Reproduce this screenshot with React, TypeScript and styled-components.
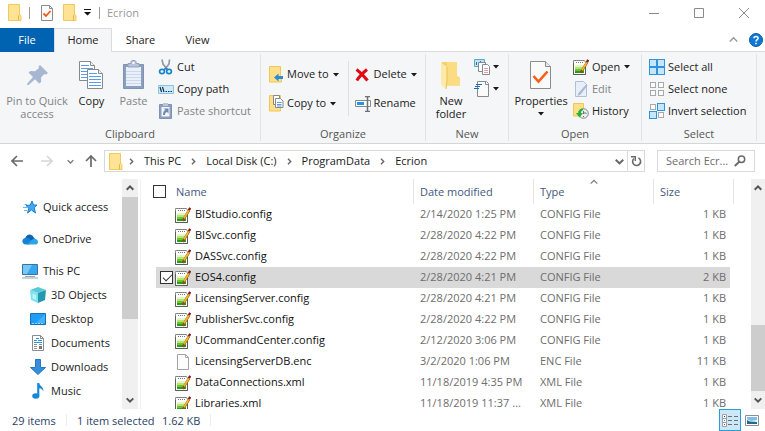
import React from "react";
import styled, { createGlobalStyle } from "styled-components";

const Global = createGlobalStyle`
  * { box-sizing: border-box; }
  body { margin: 0; background: #fff; }
  body, button, input { font: 11px/13px "Open Sans", "Noto Sans", sans-serif; color: #1a1a1a; }
  button { border: 0; padding: 0; background: none; white-space: nowrap; }
  svg { display: block; flex: none; }
`;

/* ---------- icons ---------- */

const Folder = () => (
  <svg width="14" height="17" viewBox="0 0 14 17">
    <path d="M.5.5h11v10l1.500 1v5H.5z" fill="#ffe394" stroke="#f1c95c" />
    <path d="M10.500 16v-4.500l1-1" fill="none" stroke="#e3b544" />
  </svg>
);

const CheckDoc = () => (
  <svg width="12" height="16" viewBox="0 0 12 16">
    <path d="M.5.5h8l3 3v12H.5z" fill="#fcfcfc" stroke="#8b8b8b" />
    <path d="M8.500.5v3h3" fill="none" stroke="#8b8b8b" />
    <path d="M2.500 8.500l2.500 2.500 4.500-5" fill="none" stroke="#f0591a" strokeWidth="1.800" />
  </svg>
);

const BigCheckDoc = () => (
  <svg width="22" height="29" viewBox="0 0 22 29">
    <path d="M.5.5h15l5 5v22H.5z" fill="#fafafa" stroke="#8b8b8b" />
    <path d="M15.500.5v5h5" fill="#e8e8e8" stroke="#8b8b8b" />
    <path d="M3.500 15l5 5.500 9-10" fill="none" stroke="#fa5e12" strokeWidth="2.600" />
  </svg>
);

const CaretDown = () => (
  <svg width="6" height="4" viewBox="0 0 6 4"><path d="M0 0h6L3 3.500z" fill="#1a1a1a" /></svg>
);

const QuickCaret = () => (
  <svg width="8" height="7" viewBox="0 0 8 7"><path d="M0 0h7v1H0zM0 3h7L3.500 6.500z" fill="#111" /></svg>
);

const Pin = () => (
  <svg width="21" height="22" viewBox="0 0 21 22">
    <path d="M13 1l8 8-2 1.500-2-.3-3 3.300.2 4.500-2 1.500-4.200-4.200L1.500 21 0 21l.3-1.500L6 13 1.500 8.500 3.500 7l4.500.2 4-3.200-.5-1.500z" fill="#a7b7d1" />
  </svg>
);

const Page = ({ x, y }: { x: number; y: number }) => (
  <g transform={`translate(${x} ${y})`}>
    <path d="M.5.5h11l4 4v15H.5z" fill="#fff" stroke="#858a90" />
    <path d="M11.500.5v4h4" fill="#eee" stroke="#858a90" />
    <path d="M2 4.500h8M2 7.500h12M2 10.500h12M2 13.500h12M2 16.500h12" stroke="#5b9bea" />
  </g>
);

const BigCopy = () => (
  <svg width="25" height="29" viewBox="0 0 25 29"><Page x={0} y={0} /><Page x={8} y={8} /></svg>
);

const BigPaste = () => (
  <svg width="21" height="30" viewBox="0 0 21 30">
    <path d="M.5 4.500h20v24H.5z" fill="#8d9fbe" stroke="#8092b2" />
    <path d="M3 7h15v19H3z" fill="#eaf0fa" />
    <path d="M3 11.500h15M3 14.500h15M3 17.500h15M3 20.500h15M3 23.500h15" stroke="#cbd8ec" />
    <path d="M5 7V3.500h3V1.500l1-1h3l1 1v2h3V7z" fill="#b7c4d9" stroke="#93a3bf" />
    <path d="M9.500 2h2v2h-2z" fill="#fff" />
  </svg>
);

const Scissors = () => (
  <svg width="16" height="16" viewBox="0 0 16 16">
    <path d="M4 .5L5 5l4.500 5.500M11.500.5L11 5l-4.500 5.500" fill="none" stroke="#8f9aa5" strokeWidth="1.700" />
    <ellipse cx="4" cy="12.500" rx="2.400" ry="2.200" fill="none" stroke="#1787c9" strokeWidth="1.700" />
    <ellipse cx="11" cy="12.500" rx="2.400" ry="2.200" fill="none" stroke="#1787c9" strokeWidth="1.700" />
    <path d="M6 11l2-2 2 2" fill="none" stroke="#1787c9" strokeWidth="1.400" />
  </svg>
);

const CopyPath = () => (
  <svg width="16" height="16" viewBox="0 0 16 16">
    <path d="M.5 4.500h15v8H.5z" fill="#cdeafa" stroke="#8cc3e2" />
    <path d="M2 6l1.500 5M4.500 6L6 11" stroke="#16324a" strokeWidth="1.200" />
    <path d="M7.500 10h1.500v1H7.500zM10 10h1.500v1H10zM12.500 10H14v1h-1.500z" fill="#16324a" />
  </svg>
);

const PasteShortcut = () => (
  <svg width="16" height="16" viewBox="0 0 16 16">
    <path d="M1.500 1.500h12v14h-12z" fill="#8d9fbe" stroke="#8092b2" />
    <path d="M5 0h5v3H5z" fill="#b7c4d9" />
    <path d="M3.500 4h8v9.500h-8z" fill="#f1f5fb" />
    <path d="M5.500 5.500h5v5L9 9c-1.500 0-2 1.500-2 3H5c0-3 1-4.500 2.500-5z" fill="#7086ab" />
  </svg>
);

const MoveTo = () => (
  <svg width="15" height="17" viewBox="0 0 15 17">
    <path d="M.5.5h11v9l1 1v5.500H.5z" fill="#ffe089" stroke="#efc757" />
    <path d="M5 11.500L9.500 7.500V10H14v3H9.500v2.500z" fill="#2f8ad8" />
  </svg>
);

const CopyTo = () => (
  <svg width="15" height="17" viewBox="0 0 15 17">
    <path d="M.5.500h11V16H.5z" fill="#ffe089" stroke="#efc757" />
    <path d="M4.500.5h6v9h-6z" fill="#fff" stroke="#858a90" />
    <path d="M6.500 3.500h5l2.500 2.500v6.500H6.500z" fill="#fff" stroke="#858a90" />
    <path d="M8 7.500h4.500M8 9.500h4.500M8 11h4.500" stroke="#5b9bea" />
  </svg>
);

const DeleteX = () => (
  <svg width="15" height="14" viewBox="0 0 15 14">
    <path d="M1.500 1.500C5 4 9.500 8.500 12.500 12.500M12 1.500C9 4 4 9 1.800 12.500" fill="none" stroke="#df0a14" strokeWidth="3" />
  </svg>
);

const Rename = () => (
  <svg width="16" height="16" viewBox="0 0 16 16">
    <path d="M.5 4.500h15v6H.5z" fill="#fff" stroke="#7d8a96" />
    <path d="M2 6h7v3H2z" fill="#2e90e0" />
    <path d="M12.500 1v14M10 .5h5M10 15.500h5" stroke="#6d7075" strokeWidth="1.500" />
  </svg>
);

const NewFolder = () => (
  <svg width="20" height="29" viewBox="0 0 20 29">
    <path d="M1 1h14l1 14 3 2v7.500H1z" fill="#f5cf6b" />
    <path d="M6 1h10v14.500l3 2.500v6.500H5z" fill="#fbdc82" />
    <path d="M0 1.500L6 6v14l-1 8-5-5z" fill="#ffeaa8" />
    <path d="M6 6v14l-1 8" fill="none" stroke="#e9c15a" />
  </svg>
);

const NewItem = () => (
  <svg width="17" height="17" viewBox="0 0 17 17">
    <path d="M.5.5h10v7H.5z" fill="#bfe3f5" stroke="#5fa6cd" />
    <path d="M2.500 3v3M6.500 2v3" stroke="#31739c" />
    <path d="M4.500 3.500h7v9h-7z" fill="#fff" stroke="#858a90" />
    <path d="M8.500 5.500h5l2 2v8h-7z" fill="#fff" stroke="#858a90" />
    <path d="M10 9.500h4M10 11.500h4M10 13.500h4" stroke="#e79a9a" />
  </svg>
);

const EasyAccess = () => (
  <svg width="17" height="17" viewBox="0 0 17 17">
    <path d="M3.500.5h9l2 2v13h-11z" fill="#fbfbfb" stroke="#858a90" />
    <path d="M11.500.5v3h3" fill="none" stroke="#858a90" />
    <path d="M2 3.500h6M1 5.500h5M0 7.500h5" stroke="#1a6db4" />
  </svg>
);

const Notepad = () => (
  <svg width="16" height="16" viewBox="0 0 16 16">
    <path d="M.5 1.500h11l1 2v12H.5z" fill="#fff" stroke="#8a8f87" />
    <path d="M.5 4v11.500h12V8" fill="none" stroke="#595e57" />
    <path d="M2 1.500h9M3 3.500h8" stroke="#777" strokeDasharray="1 1" />
    <path d="M2 6h9v2H2z" fill="#e4f5cb" />
    <path d="M2 8h9v2H2z" fill="#b4e56d" />
    <path d="M2 10h9v2H2z" fill="#6cc42c" />
    <path d="M2 12h9v2H2z" fill="#2f9a22" />
    <path d="M14 3.500L9 11.500l-1 2.500" fill="none" stroke="#7a5a1a" strokeWidth="2.400" />
    <path d="M13.800 3.500L9 11.300" stroke="#fdb62a" strokeWidth="1.700" />
    <path d="M15.200.8L13.900 3.300" stroke="#8d1620" strokeWidth="2.400" />
  </svg>
);

const EditIcon = () => (
  <svg width="16" height="16" viewBox="0 0 16 16">
    <path d="M2.500.5h8l3 3v12h-11z" fill="#e9eff8" stroke="#b1c0d8" />
    <path d="M13.500 3l-8 9-1 3 3-1.500 7-9z" fill="#a9b9d4" />
  </svg>
);

const HistoryIcon = () => (
  <svg width="16" height="16" viewBox="0 0 16 16">
    <path d="M.5.5h10V13H.5z" fill="#ffe089" stroke="#efc757" />
    <circle cx="10.500" cy="10.500" r="4.800" fill="#eceeee" stroke="#83898b" />
    <path d="M10.500 8v3l2-2M7.500 10.500h1M12.500 10.500h1M10.500 13v1" fill="none" stroke="#6b7072" />
    <path d="M9 5.500C6 6 5 8.500 5.500 10H3l3.500 4.500L10 10H8c0-2 1-2.500 2.500-3z" fill="#27b13c" />
  </svg>
);

const Squares = ({ on }: { on: boolean[] }) => (
  <svg width="16" height="16" viewBox="0 0 16 16">
    {on.map((v, i) => {
      const x = (i % 2) * 8, y = i > 1 ? 8 : 0;
      return v
        ? <rect key={i} x={x + 0.5} y={y + 0.5} width="7" height="7" fill="#c5e6fb" stroke="#2f93dd" />
        : <rect key={i} x={x + 1.5} y={y + 1.5} width="5" height="5" fill="#fbfbfb" stroke="#a9a9a9" />;
    })}
  </svg>
);

const Arrow = ({ color, up }: { color: string; up?: boolean }) => (
  <svg width="12" height="12" viewBox="0 0 12 12">
    <path d={up ? "M6 12V1M1 6l5-5 5 5" : "M12 6H1M6 1L1 6l5 5"} fill="none" stroke={color} strokeWidth="1.700" />
  </svg>
);

const ArrowRight = () => (
  <svg width="12" height="12" viewBox="0 0 12 12">
    <path d="M0 6h11M6 1l5 5-5 5" fill="none" stroke="#d6d6d6" strokeWidth="1.700" />
  </svg>
);

const Chevron = ({ w = 8, color = "#555", stroke = 1.5, up }: { w?: number; color?: string; stroke?: number; up?: boolean }) => (
  <svg width={w} height={w} viewBox="0 0 8 8">
    <path d={up ? "M.7 5.700L4 2.400l3.300 3.300" : "M.7 2.400L4 5.700l3.300-3.300"} fill="none" stroke={color} strokeWidth={stroke} />
  </svg>
);

const Crumb = () => (
  <svg width="5" height="7" viewBox="0 0 5 7"><path d="M1 .700L3.700 3.500 1 6.300" fill="none" stroke="#666" strokeWidth="1.400" /></svg>
);

const RefreshIcon = () => (
  <svg width="11" height="12" viewBox="0 0 11 12">
    <path d="M7.500 3A4 4 0 1 1 3 3.500" fill="none" stroke="#6b6b6b" strokeWidth="1.600" />
    <path d="M0 1.800h4.300V6" fill="none" stroke="#6b6b6b" strokeWidth="1.400" />
  </svg>
);

const Magnifier = () => (
  <svg width="12" height="12" viewBox="0 0 12 12">
    <circle cx="7.500" cy="4.300" r="3.200" fill="none" stroke="#6b6b6b" strokeWidth="1.500" />
    <path d="M5.200 6.700L.8 11" stroke="#6b6b6b" strokeWidth="1.900" />
  </svg>
);

const Help = () => (
  <svg width="14" height="14" viewBox="0 0 14 14">
    <circle cx="7" cy="7" r="6.500" fill="#0f78d4" stroke="#0b5cab" />
    <path d="M4.900 5.300C5 2.800 9.100 2.800 9.100 5.200 9.100 6.600 7 6.800 7 8.600M7 9.700v1.500" fill="none" stroke="#fff" strokeWidth="1.500" />
  </svg>
);

const Star = () => (
  <svg width="15" height="14" viewBox="0 0 15 14">
    <path d="M9 1l1.600 4H14l-2.800 2.700L12.500 13 8.500 10 4.500 13l1.300-4.800L3 5.500l4.200-.4z" fill="#42a9ef" stroke="#1d7fcb" />
    <path d="M1.500 4.500H4M0 7.500h4M1 10.500h3" stroke="#66b5ec" />
  </svg>
);

const Cloud = () => (
  <svg width="16" height="11" viewBox="0 0 16 11">
    <path d="M3.500 3.500C5-.5 10-.5 11.500 3L13 5 5 9z" fill="#0f63b5" />
    <path d="M4 10.500C-.500 10.500-.8 5 3 4c3-.8 5 1 7 3.500l-3 3z" fill="#1682d6" />
    <path d="M5 10.500l6-5.500c3-1 5 1 5 3 0 1.500-1 2.500-2.500 2.500z" fill="#29a5ea" />
  </svg>
);

const Computer = () => (
  <svg width="16" height="15" viewBox="0 0 16 15">
    <path d="M.5.500h15v10H.5z" fill="#37a7ef" stroke="#3d7396" />
    <path d="M1 1h9L5 10H1z" fill="#74c8fa" />
    <path d="M3 12h10v1H3zM0 13.500h16v1H0z" fill="#8da7b8" />
  </svg>
);

const Cube = () => (
  <svg width="16" height="16" viewBox="0 0 16 16">
    <path d="M0 3l8-3 8 3-8 3z" fill="#58c9da" />
    <path d="M0 3l8 3v10l-7-3z" fill="#7fe2ee" />
    <path d="M16 3L8 6v10l7-3z" fill="#2398af" />
    <path d="M2.500 6.500L6 8v5l-3.500-1.500z" fill="#baf3f8" />
  </svg>
);

const DesktopIcon = () => (
  <svg width="16" height="12" viewBox="0 0 16 12">
    <path d="M.5.500h15v11H.5z" fill="#1d9df5" stroke="#1270b8" />
    <path d="M15 1v9L6 10z" fill="#43b2fa" />
    <path d="M2 10.500h12" stroke="#9bd7fc" strokeDasharray="2 1" />
  </svg>
);

const DocIcon = () => (
  <svg width="14" height="16" viewBox="0 0 14 16">
    <path d="M1.500.500h8l3 3v12h-11z" fill="#fff" stroke="#8b8b8b" />
    <path d="M9.500.500v3h3" fill="none" stroke="#8b8b8b" />
    <path d="M5 3.500h3M3 5.500h3M7 5.500h4M3 7.500h8" stroke="#2b93dd" />
    <path d="M3 9.500h3M3 11.500h3M3 13.500h3M8 9.500h3" stroke="#8d8d8d" />
    <path d="M8 11h3v3H8z" fill="#777" />
  </svg>
);

const DownIcon = () => (
  <svg width="16" height="16" viewBox="0 0 16 16"><path d="M5.500.500h5v8h5L8 15.500.5 8.500h5z" fill="#3490dc" stroke="#2677c0" /></svg>
);

const MusicIcon = () => (
  <svg width="12" height="16" viewBox="0 0 12 16">
    <ellipse cx="3.800" cy="13" rx="3.600" ry="2.700" fill="#1787d9" />
    <path d="M5.200 0h2.100c0 3 4.700 3.500 4 8.500C10.500 6 9 5.500 7.300 5.300V13H5.200z" fill="#1787d9" />
  </svg>
);

const BlankFile = () => (
  <svg width="16" height="16" viewBox="0 0 16 16">
    <path d="M2.500.500h8l3 3v12h-11z" fill="#fcfcfc" stroke="#a3a3a3" />
    <path d="M10.500.500v3h3" fill="none" stroke="#a3a3a3" />
  </svg>
);

const DetailsView = () => (
  <svg width="16" height="13" viewBox="0 0 16 13">
    <path d="M.5.500h4v12h-4z" fill="#fff" stroke="#a0a0a0" />
    <path d="M1 4.500h3M1 8.500h3" stroke="#a0a0a0" />
    <path d="M2 2h1v1H2z" fill="#444" /><path d="M2 6h1v1H2z" fill="#2291e8" /><path d="M2 10h1v1H2z" fill="#e22" />
    <path d="M6 2.500h4M12 2.500h4M6 6.500h4M12 6.500h4M6 10.500h4M12 10.500h4" stroke="#66727a" />
  </svg>
);

const ThumbView = () => (
  <svg width="14" height="11" viewBox="0 0 14 11">
    <path d="M.5.500h13v10H.5z" fill="#fff" stroke="#8f8f8f" />
    <path d="M2 2h10v4H2z" fill="#7fbdf0" />
    <path d="M2 4l4 2 6-1v2H2z" fill="#e8f4fb" />
    <path d="M2 5l3 1.500 7 .5v2H2z" fill="#256a84" />
  </svg>
);

/* ---------- window frame ---------- */

const Window = styled.div`
  display: flex; flex-direction: column; height: 100vh; overflow: hidden; background: #fff;
`;
const TitleBar = styled.header`
  display: flex; align-items: center; height: 28px; padding: 0 16px 3px 8px;
`;
const QuickButton = styled.button<{ $gap: number }>`margin-right: ${p => p.$gap}px;`;
const TitleRule = styled.span<{ $gap: number }>`
  width: 1px; height: 12px; margin-right: ${p => p.$gap}px; background: #9a9a9a;
`;
const Title = styled.h1`margin: 0; flex: 1; font-size: 11px; font-weight: 400; color: #999;`;
const WindowButtons = styled.div`display: flex; gap: 35px; align-items: center;`;

const Tabs = styled.nav`display: flex; height: 24px; padding-right: 2px; border-bottom: 1px solid #dadbdc;`;
const Tab = styled.button<{ $kind?: "file" | "active" }>`
  height: 24px;
  padding-bottom: 2px;
  width: ${p => (p.$kind === "file" ? 54 : p.$kind === "active" ? 58 : 57)}px;
  color: ${p => (p.$kind === "file" ? "#fff" : "#222")};
  background: ${p => (p.$kind === "file" ? "#0063b1" : p.$kind === "active" ? "#f5f6f7" : "transparent")};
  border: ${p => (p.$kind === "active" ? "1px solid #dadbdc" : 0)};
  border-bottom: 0;
`;
const TabTools = styled.div`display: flex; gap: 11px; align-items: center; margin-left: auto;`;

/* ---------- ribbon ---------- */

const Label = styled.span`padding-bottom: 2px;`;
const Ribbon = styled.section`
  display: flex; height: 92px; background: #f5f6f7; border-bottom: 1px solid #d4d5d6;
`;
const Group = styled.div<{ $width: number; $pad: number }>`
  display: grid; grid-template-rows: 74px 16px; width: ${p => p.$width}px;
  border-right: 1px solid #e2e3e4; margin: 2px 0; & > div { margin-top: -2px; padding-left: ${p => p.$pad}px; }
`;
const GroupBody = styled.div`display: flex; align-items: flex-start;`;
const GroupLabel = styled.span`text-align: center; color: #555; margin-top: -1px;`;
const LargeButton = styled.button<{ $width: number; $off?: boolean }>`
  display: flex; flex-direction: column; align-items: center; width: ${p => p.$width}px; padding-top: 8px;
  color: ${p => (p.$off ? "#838383" : "#222")}; white-space: normal;
`;
const LargeIcon = styled.span<{ $drop?: number }>`height: 34px; padding-top: ${p => p.$drop ?? 0}px;`;
const CaretSlot = styled.span`padding-top: 5px;`;
const Stack = styled.div<{ $roomy?: boolean; $left?: number }>`
  display: grid; grid-auto-rows: ${p => (p.$roomy ? 29 : 22)}px;
  padding-top: ${p => (p.$roomy ? 8 : 4)}px; margin-left: ${p => p.$left ?? 0}px;
`;
const SmallButton = styled.button<{ $off?: boolean }>`
  display: flex; align-items: center; gap: 3px; color: ${p => (p.$off ? "#838383" : "#222")};
`;
const SmallIcon = styled.span`display: grid; place-items: center; width: 16px;`;
const SmallCaret = styled.span`padding-left: 1px;`;
const InnerRule = styled.span`width: 1px; height: 55px; margin: 9px 6px 0 9px; background: #dfe0e1;`;

/* ---------- address row ---------- */

const AddressRow = styled.div`display: flex; align-items: center; height: 35px; padding: 0 10px 1px 11px;`;
const NavButton = styled.button<{ $gap: number }>`margin-right: ${p => p.$gap}px;`;
const Field = styled.div`display: flex; align-items: center; height: 22px; border: 1px solid #d9d9d9;`;
const Address = styled(Field)`flex: 1; padding-left: 4px;`;
const Crumbs = styled.div`display: flex; align-items: center; gap: 10px; flex: 1; margin-left: 6px;`;
const CrumbLink = styled.a`padding-bottom: 2px; color: #1a1a1a; text-decoration: none;`;
const DropButton = styled.button`padding: 0 3px;`;
const RefreshButton = styled.button`
  display: grid; place-items: center; width: 17px; height: 20px; border-left: 1px solid #d9d9d9;
`;
const Search = styled(Field)`width: 98px; margin-left: 12px; padding: 0 8px;`;
const SearchInput = styled.input`
  flex: 1; min-width: 0; border: 0; padding: 0 0 2px; outline: 0; background: none;
  &::placeholder { color: #6d6d6d; opacity: 1; }
`;

/* ---------- body ---------- */

const Body = styled.main`display: flex; flex: 1; min-height: 0; overflow: hidden;`;
const Tree = styled.nav`width: 122px; padding-top: 8px;`;
const TreeItem = styled.a<{ $child?: boolean }>`
  display: flex; align-items: center; gap: 5px; height: 24px;
  margin-top: ${p => (p.$child ? 0 : 8)}px; padding-left: ${p => (p.$child ? 30 : 22)}px;
  color: #1a1a1a; text-decoration: none; white-space: nowrap;
`;
const ScrollBar = styled.div<{ $width: number }>`
  display: flex; flex-direction: column; flex: none; width: ${p => p.$width}px; background: #f0f0f0;
`;
const ScrollButton = styled.button`display: grid; place-items: center; height: 18px; flex: none;`;
const Track = styled.div<{ $end?: boolean }>`
  display: flex; flex: 1; align-items: ${p => (p.$end ? "flex-end" : "flex-start")};
`;
const Thumb = styled.span<{ $part: number }>`width: 100%; height: ${p => p.$part}%; background: #cdcdcd;`;
const List = styled.section`
  flex: 1; min-width: 0; margin-left: 2px; padding: 0 17px 0 12px; border-left: 1px solid #f0f0f0; overflow: hidden;
`;
const Table = styled.table`
  width: 100%; table-layout: fixed; border-collapse: separate; border-spacing: 0; line-height: 11px;
`;
const Col = styled.col<{ $width?: number }>`width: ${p => (p.$width ? `${p.$width}px` : "auto")};`;
const Head = styled.th<{ $plain?: boolean; $first?: boolean }>`
  position: relative; height: 25px; text-align: left; font-weight: 400; color: #43597c;
  padding: 0 0 0 ${p => (p.$first ? 0 : p.$plain ? 1 : 6)}px;
  border-right: ${p => (p.$first ? 0 : "1px solid #e5e5e5")};
`;
const SortMark = styled.span`position: absolute; top: -1px; left: 50%; margin-left: -4px;`;
const Row = styled.tr<{ $on?: boolean }>`
  & > td { background: ${p => (p.$on ? "#d9d9d9" : "#fff")}; box-shadow: ${p => (p.$on ? "0 1px #d9d9d9" : "none")}; }
`;
const Cell = styled.td<{ $main?: boolean; $size?: boolean; $check?: boolean }>`
  height: 21px; white-space: nowrap; overflow: hidden;
  color: ${p => (p.$main ? "#111" : "#6d6d6d")};
  text-align: ${p => (p.$size ? "right" : "left")};
  padding: 0 ${p => (p.$size ? 4 : 0)}px ${p => (p.$main || p.$check ? 0 : 2)}px ${p => (p.$main ? 0 : p.$check ? 4 : 6)}px;
  ${p => p.$check && "border-left: 3px solid #fff;"}
  ${p => p.$size && "border-right: 4px solid #fff;"}
`;
const FileName = styled.span`display: flex; align-items: center; gap: 4px;`;
const Tick = styled.input`
  appearance: none; display: block; width: 13px; height: 13px; margin: 0; border: 1px solid #333; background: #fff;
  &:checked::after {
    content: ""; display: block; width: 8px; height: 4px; margin: 2px 0 0 2px;
    border: solid #333; border-width: 0 0 1px 1px; transform: rotate(-45deg);
  }
`;

const Status = styled.footer`
  display: flex; align-items: center; flex: none; height: 22px; padding: 0 2px 0 12px; color: #2c4064;
`;
const StatusText = styled.span<{ $width: number }>`width: ${p => p.$width}px; white-space: pre;`;
const StatusRule = styled.span`width: 1px; height: 12px; margin-right: 10px; background: #ececec;`;
const ViewButton = styled.button<{ $on?: boolean }>`
  display: grid; place-items: center; width: 22px; height: 22px;
  background: ${p => (p.$on ? "#cce8f7" : "none")}; border: ${p => (p.$on ? "1px solid #2a9dd6" : 0)};
`;
const Views = styled.div`display: flex; margin-left: auto;`;

/* ---------- data ---------- */

const files = [
  ["BIStudio.config", "2/14/2020 1:25 PM", "CONFIG File", "1 KB"],
  ["BISvc.config", "2/28/2020 4:22 PM", "CONFIG File", "1 KB"],
  ["DASSvc.config", "2/28/2020 4:22 PM", "CONFIG File", "1 KB"],
  ["EOS4.config", "2/28/2020 4:21 PM", "CONFIG File", "2 KB"],
  ["LicensingServer.config", "2/28/2020 4:21 PM", "CONFIG File", "1 KB"],
  ["PublisherSvc.config", "2/28/2020 4:22 PM", "CONFIG File", "1 KB"],
  ["UCommandCenter.config", "2/12/2020 3:06 PM", "CONFIG File", "1 KB"],
  ["LicensingServerDB.enc", "3/2/2020 1:06 PM", "ENC File", "11 KB"],
  ["DataConnections.xml", "11/18/2019 4:35 PM", "XML File", "1 KB"],
  ["Libraries.xml", "11/18/2019 11:37 ...", "XML File", "1 KB"],
];

const places: [string, React.ReactNode, boolean][] = [
  ["Quick access", <Star />, false],
  ["OneDrive", <Cloud />, false],
  ["This PC", <Computer />, false],
  ["3D Objects", <Cube />, true],
  ["Desktop", <DesktopIcon />, true],
  ["Documents", <DocIcon />, true],
  ["Downloads", <DownIcon />, true],
  ["Music", <MusicIcon />, true],
];

const Small = ({ icon, text, caret, off }: { icon: React.ReactNode; text?: string; caret?: boolean; off?: boolean }) => (
  <SmallButton $off={off} disabled={off}>
    <SmallIcon>{icon}</SmallIcon>
    {text && <Label>{text}</Label>}
    {caret && (text ? <SmallCaret><CaretDown /></SmallCaret> : <CaretDown />)}
  </SmallButton>
);

const Scroll = ({ width, part, end }: { width: number; part: number; end?: boolean }) => (
  <ScrollBar $width={width}>
    <ScrollButton aria-label="Scroll up"><Chevron up stroke={2} /></ScrollButton>
    <Track $end={end}><Thumb $part={part} /></Track>
    <ScrollButton aria-label="Scroll down"><Chevron stroke={2} /></ScrollButton>
  </ScrollBar>
);

export default function App() {
  const [selected, setSelected] = React.useState("EOS4.config");
  return (
    <Window>
      <Global />
      <TitleBar>
        <QuickButton $gap={7} aria-label="Window menu"><Folder /></QuickButton>
        <TitleRule $gap={11} />
        <QuickButton $gap={10} aria-label="Properties"><CheckDoc /></QuickButton>
        <QuickButton $gap={7} aria-label="New folder"><Folder /></QuickButton>
        <QuickButton $gap={7} aria-label="Customize toolbar"><QuickCaret /></QuickButton>
        <TitleRule $gap={7} />
        <Title>Ecrion</Title>
        <WindowButtons>
          <button aria-label="Minimize"><svg width="10" height="10"><path d="M0 5.500h10" stroke="#8a8a8a" /></svg></button>
          <button aria-label="Maximize"><svg width="10" height="10"><path d="M.5.500h9v9h-9z" fill="none" stroke="#8a8a8a" /></svg></button>
          <button aria-label="Close"><svg width="10" height="10"><path d="M0 0l10 10M10 0L0 10" stroke="#8a8a8a" /></svg></button>
        </WindowButtons>
      </TitleBar>
      <Tabs>
        <Tab $kind="file">File</Tab>
        <Tab $kind="active">Home</Tab>
        <Tab>Share</Tab>
        <Tab>View</Tab>
        <TabTools>
          <button aria-label="Collapse ribbon"><Chevron up w={9} color="#999" stroke={1.3} /></button>
          <button aria-label="Help"><Help /></button>
        </TabTools>
      </Tabs>

      <Ribbon>
        <Group $width={261} $pad={4}>
          <GroupBody>
            <LargeButton $width={66} $off disabled><LargeIcon $drop={4}><Pin /></LargeIcon>Pin to Quick access</LargeButton>
            <LargeButton $width={43}><LargeIcon $drop={1}><BigCopy /></LargeIcon>Copy</LargeButton>
            <LargeButton $width={41} $off disabled><LargeIcon><BigPaste /></LargeIcon>Paste</LargeButton>
            <Stack $left={4}>
              <Small icon={<Scissors />} text="Cut" />
              <Small icon={<CopyPath />} text="Copy path" />
              <Small icon={<PasteShortcut />} text="Paste shortcut" off />
            </Stack>
          </GroupBody>
          <GroupLabel>Clipboard</GroupLabel>
        </Group>
        <Group $width={165} $pad={7}>
          <GroupBody>
            <Stack $roomy>
              <Small icon={<MoveTo />} text="Move to" caret />
              <Small icon={<CopyTo />} text="Copy to" caret />
            </Stack>
            <InnerRule />
            <Stack $roomy>
              <Small icon={<DeleteX />} text="Delete" caret />
              <Small icon={<Rename />} text="Rename" />
            </Stack>
          </GroupBody>
          <GroupLabel>Organize</GroupLabel>
        </Group>
        <Group $width={83} $pad={4}>
          <GroupBody>
            <LargeButton $width={42}><LargeIcon $drop={1}><NewFolder /></LargeIcon>New folder</LargeButton>
            <Stack $left={2}>
              <Small icon={<NewItem />} caret />
              <Small icon={<EasyAccess />} caret />
            </Stack>
          </GroupBody>
          <GroupLabel>New</GroupLabel>
        </Group>
        <Group $width={133} $pad={4}>
          <GroupBody>
            <LargeButton $width={56}>
              <LargeIcon $drop={1}><BigCheckDoc /></LargeIcon>Properties<CaretSlot><CaretDown /></CaretSlot>
            </LargeButton>
            <Stack $left={4}>
              <Small icon={<Notepad />} text="Open" caret />
              <Small icon={<EditIcon />} text="Edit" off />
              <Small icon={<HistoryIcon />} text="History" />
            </Stack>
          </GroupBody>
          <GroupLabel>Open</GroupLabel>
        </Group>
        <Group $width={115} $pad={7}>
          <GroupBody>
            <Stack>
              <Small icon={<Squares on={[true, true, true, true]} />} text="Select all" />
              <Small icon={<Squares on={[false, false, false, false]} />} text="Select none" />
              <Small icon={<Squares on={[false, true, true, false]} />} text="Invert selection" />
            </Stack>
          </GroupBody>
          <GroupLabel>Select</GroupLabel>
        </Group>
      </Ribbon>

      <AddressRow>
        <NavButton $gap={18} aria-label="Back"><Arrow color="#6b6b6b" /></NavButton>
        <NavButton $gap={14} aria-label="Forward"><ArrowRight /></NavButton>
        <NavButton $gap={11} aria-label="Recent locations"><Chevron w={7} color="#777" /></NavButton>
        <NavButton $gap={7} aria-label="Up"><Arrow up color="#6b6b6b" /></NavButton>
        <Address>
          <Folder />
          <Crumbs>
            {["This PC", "Local Disk (C:)", "ProgramData", "Ecrion"].map(c => (
              <React.Fragment key={c}><Crumb /><CrumbLink href="#">{c}</CrumbLink></React.Fragment>
            ))}
          </Crumbs>
          <DropButton aria-label="Previous locations"><Chevron w={9} color="#666" stroke={1.8} /></DropButton>
          <RefreshButton aria-label="Refresh"><RefreshIcon /></RefreshButton>
        </Address>
        <Search>
          <SearchInput aria-label="Search" placeholder="Search Ecr..." />
          <button aria-label="Run search"><Magnifier /></button>
        </Search>
      </AddressRow>

      <Body>
        <Tree>
          {places.map(([name, icon, child]) => (
            <TreeItem key={name} href="#" $child={child}><SmallIcon>{icon}</SmallIcon><Label>{name}</Label></TreeItem>
          ))}
        </Tree>
        <Scroll width={16} part={63} />
        <List>
          <Table>
            <colgroup><Col $width={22} /><Col /><Col $width={120} /><Col $width={120} /><Col $width={80} /></colgroup>
            <thead>
              <tr>
                <Head $first><Tick type="checkbox" aria-label="Select all files" /></Head>
                <Head $plain>Name</Head>
                <Head>Date modified</Head>
                <Head>Type<SortMark><Chevron up color="#777" stroke={1.1} /></SortMark></Head>
                <Head>Size</Head>
              </tr>
            </thead>
            <tbody>
              {files.map(([name, date, type, size]) => (
                <Row key={name} $on={name === selected} onClick={() => setSelected(name)}>
                  <Cell $check>
                    {name === selected && <Tick type="checkbox" checked readOnly aria-label={`Select ${name}`} />}
                  </Cell>
                  <Cell $main>
                    <FileName>{name.endsWith(".enc") ? <BlankFile /> : <Notepad />}<Label>{name}</Label></FileName>
                  </Cell>
                  <Cell>{date}</Cell>
                  <Cell>{type}</Cell>
                  <Cell $size>{size}</Cell>
                </Row>
              ))}
            </tbody>
          </Table>
        </List>
        <Scroll width={14} part={34} end />
      </Body>

      <Status>
        <StatusText $width={54}>29 items</StatusText>
        <StatusRule />
        <StatusText $width={85}>1 item selected</StatusText>
        <StatusText $width={48}>1.62 KB</StatusText>
        <StatusRule />
        <Views>
          <ViewButton $on aria-label="Details view"><DetailsView /></ViewButton>
          <ViewButton aria-label="Thumbnail view"><ThumbView /></ViewButton>
        </Views>
      </Status>
    </Window>
  );
}
